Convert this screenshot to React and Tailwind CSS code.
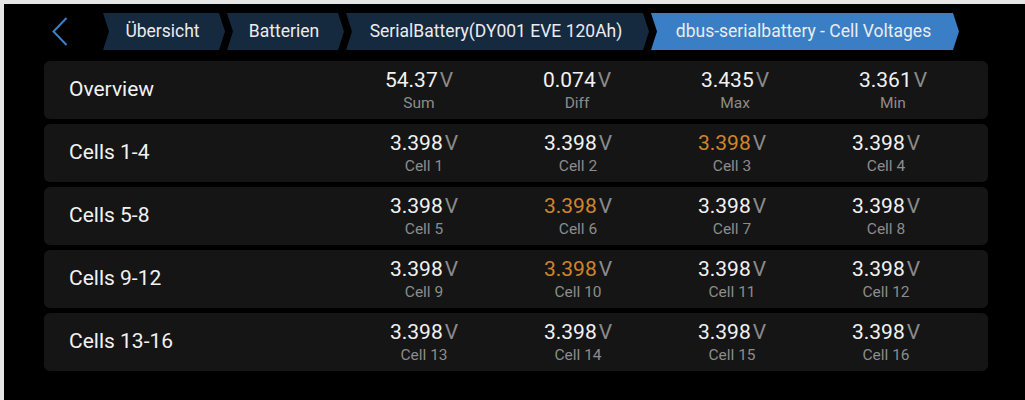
import React from "react";

const crumbs = [
  { label: "Übersicht", width: "w-[122px]", active: false },
  { label: "Batterien", width: "w-[117px]", active: false },
  { label: "SerialBattery(DY001 EVE 120Ah)", width: "w-[303px]", active: false },
  { label: "dbus-serialbattery - Cell Voltages", width: "w-[308px]", active: true },
];

const overview = [
  { value: "54.37", label: "Sum" },
  { value: "0.074", label: "Diff" },
  { value: "3.435", label: "Max" },
  { value: "3.361", label: "Min" },
];

// cells that are highlighted orange in the screenshot
const highlighted = [3, 6, 10];

const cellRows = [
  { title: "Cells 1-4", start: 1 },
  { title: "Cells 5-8", start: 5 },
  { title: "Cells 9-12", start: 9 },
  { title: "Cells 13-16", start: 13 },
];

function Value({ value, label, warn }) {
  return (
    <div className="flex flex-col items-center">
      <div className="flex items-baseline text-[21px] leading-[24px]">
        <span className={warn ? "text-[#d0852c]" : "text-[#f2f2f2]"}>{value}</span>
        <span className="ml-[2px] text-[#8a8a8a]">V</span>
      </div>
      <div className="mt-[2px] text-[15.5px] leading-[18px] text-[#8c8c8c]">{label}</div>
    </div>
  );
}

export default function App() {
  return (
    <div className="min-h-[400px] bg-[#e6e6e6] pt-[4px] pl-[4px]" style={{ fontFamily: "Roboto, 'Noto Sans', sans-serif" }}>
      <div className="h-[396px] bg-black pt-[9px] pl-[40px] pr-[37px]">
        {/* Breadcrumb bar */}
        <div className="flex h-[37px] items-center">
          <div className="flex w-[59px] items-center pl-[8px]">
            <svg width="16" height="29" viewBox="0 0 16 29" fill="none">
              <path d="M14.5 1 L1.5 14.5 L14.5 28" stroke="#3b80c8" strokeWidth="2" />
            </svg>
          </div>
          <div className="flex h-full gap-[2px]">
            {crumbs.map((c) => (
              <div
                key={c.label}
                className={`flex h-full items-center justify-center pr-[3px] text-[17.5px] text-[#ececec] [clip-path:polygon(0_0,calc(100%-6px)_0,100%_50%,calc(100%-6px)_100%,0_100%,6px_50%)] ${c.width} ${
                  c.active ? "bg-[#3a7ec6]" : "bg-[#15293f]"
                }`}
              >
                {c.label}
              </div>
            ))}
          </div>
        </div>

        {/* Rows */}
        <div className="mt-[11px] flex flex-col gap-[5px]">
          <div className="flex h-[58px] items-center rounded-[6px] bg-[#151515]">
            <div className="w-[296px] pl-[25px] text-[21px] text-[#f2f2f2]">Overview</div>
            <div className="grid grid-cols-[repeat(4,158px)]">
              {overview.map((o) => (
                <Value key={o.label} value={o.value} label={o.label} />
              ))}
            </div>
          </div>

          {cellRows.map((row) => (
            <div key={row.title} className="flex h-[58px] items-center rounded-[6px] bg-[#151515]">
              <div className="w-[303px] pl-[25px] text-[21px] text-[#f2f2f2]">{row.title}</div>
              <div className="grid grid-cols-[repeat(4,154px)]">
                {[0, 1, 2, 3].map((i) => {
                  const n = row.start + i;
                  return <Value key={n} value="3.398" label={`Cell ${n}`} warn={highlighted.includes(n)} />;
                })}
              </div>
            </div>
          ))}
        </div>
      </div>
    </div>
  );
}
